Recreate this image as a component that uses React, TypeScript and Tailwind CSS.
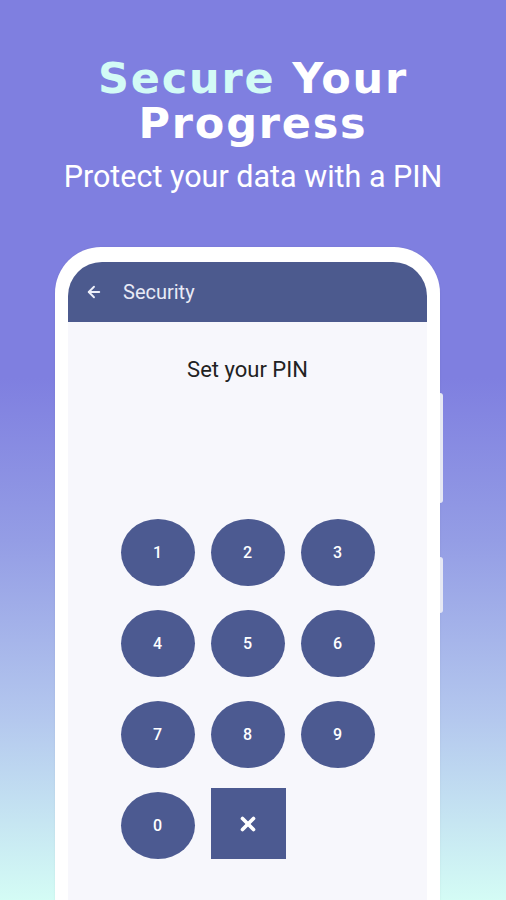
import { ArrowLeft, X } from 'lucide-react'

const keys = ['1', '2', '3', '4', '5', '6', '7', '8', '9', '0']

export default function App() {
  return (
    <div className="relative h-[900px] w-[506px] overflow-hidden bg-[linear-gradient(180deg,#7f7fe0_0%,#7f7fe0_42%,#949de5_60%,#b4c8ee_80%,#d4fcf5_100%)] font-['Roboto',sans-serif]">
      {/* Heading */}
      <div className="flex flex-col items-center pt-[56px]">
        <h1 className="text-center font-['DejaVu_Sans',sans-serif] text-[43px] font-bold leading-[45px] tracking-[1.8px] text-white">
          <span className="text-[#d3fbf6]">Secure</span> Your
          <br />
          Progress
        </h1>
        <p className="mt-[13px] text-[30.5px] leading-[36px] text-white">Protect your data with a PIN</p>
      </div>

      {/* Phone */}
      <div className="relative ml-[55px] mt-[52px] h-[700px] w-[385px] rounded-t-[46px] bg-white px-[13px] pt-[15px] shadow-[0_0_2px_rgba(0,0,0,0.08)]">
        <div className="flex h-full flex-col overflow-hidden rounded-t-[34px] bg-[#f7f7fc]">
          {/* App bar */}
          <div className="flex h-[60px] items-center gap-[20px] bg-[#4c5a8e] pl-[17px]">
            <ArrowLeft className="h-[18px] w-[18px] text-[#eef0fa]" strokeWidth={2.5} />
            <span className="text-[20px] text-[#e8eaf6]">Security</span>
          </div>

          <p className="mt-[31px] text-center text-[22px] text-[#222]">Set your PIN</p>

          {/* Keypad */}
          <div className="mx-auto mt-[133px] grid grid-cols-[74px_74px_74px] gap-x-[16px] gap-y-[24px]">
            {keys.map((k) => (
              <div
                key={k}
                className="flex h-[67px] w-[74px] items-center justify-center rounded-[50%] bg-[#4c5a91] text-[16px] font-medium text-white"
              >
                {k}
              </div>
            ))}
            <div className="-mt-[4px] flex h-[71px] w-[75px] items-center justify-center bg-[#4c5a91]">
              <X className="h-[22px] w-[22px] text-white" strokeWidth={4} />
            </div>
          </div>
        </div>

        {/* Side buttons */}
        <div className="absolute right-[-3px] top-[146px] h-[110px] w-[3px] rounded-r bg-[#e6e8f4]" />
        <div className="absolute right-[-3px] top-[310px] h-[56px] w-[3px] rounded-r bg-[#e6e8f4]" />
      </div>
    </div>
  )
}
